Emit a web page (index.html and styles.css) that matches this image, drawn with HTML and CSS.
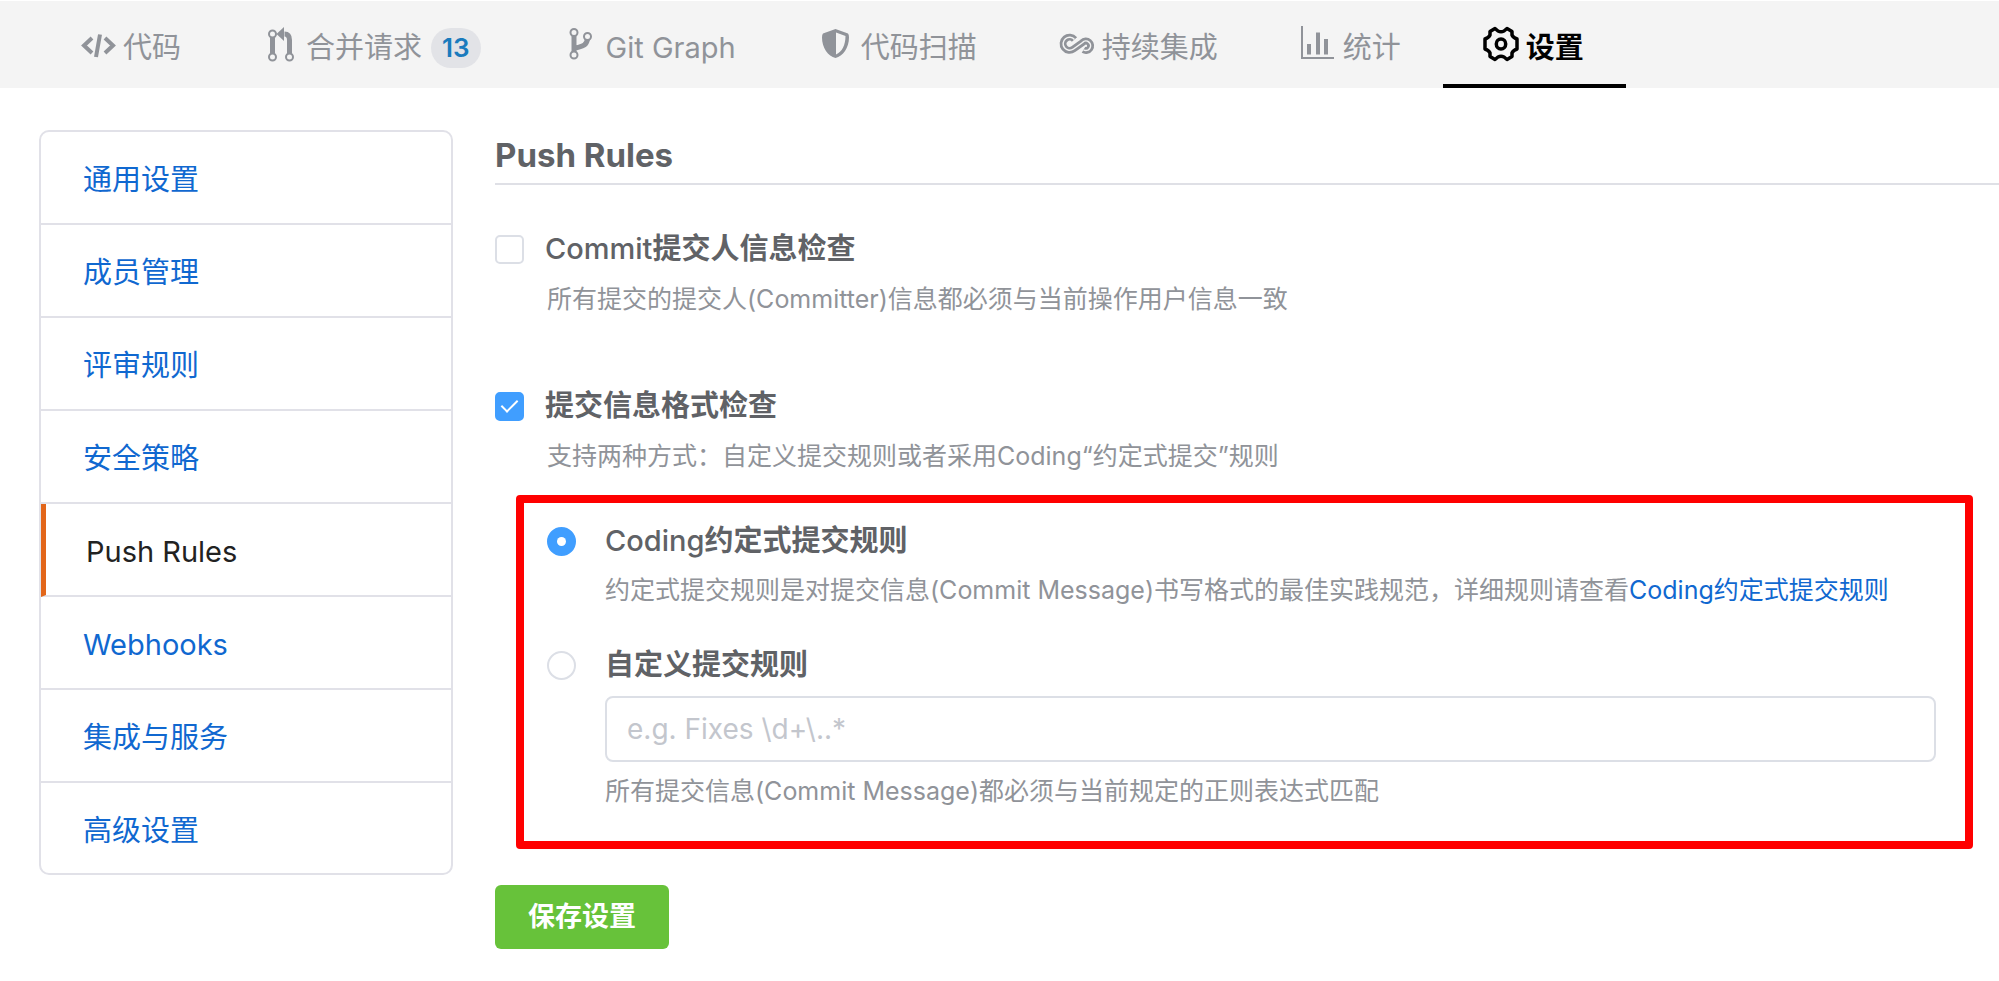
FILE: index.html
```html
<!DOCTYPE html>
<html lang="zh-CN">
<head>
<meta charset="utf-8">
<title>Push Rules</title>
<link rel="stylesheet" href="styles.css">
</head>
<body>
<nav class="tabs">
  <a class="tab" href="#code">
    <svg class="tab-icon" viewBox="0 0 35 36" fill="none" stroke="currentColor" stroke-width="4"><path d="M11 12 3 19.500 11 27M24 12l8 7.500-8 7.500M19 8.500 15 31"/></svg>
    <span>代码</span>
  </a>
  <a class="tab" href="#merge">
    <svg class="tab-icon" viewBox="0 0 35 36" fill="none" stroke="currentColor"><path stroke-width="5" d="M8.500 11v17M25.500 28V14q0-6-5-6"/><path fill="currentColor" stroke="none" d="M12.500 8 20 1v14z"/><g class="node" stroke-width="2"><circle cx="8.500" cy="8" r="3.500"/><circle cx="8.500" cy="31" r="3.500"/><circle cx="25.500" cy="31" r="3.500"/></g></svg>
    <span>合并请求</span>
    <span class="badge">13</span>
  </a>
  <a class="tab" href="#graph">
    <svg class="tab-icon" viewBox="0 0 35 36" fill="none" stroke="currentColor"><path stroke-width="5" d="M10 7v20M10 23c5-3 12-1 13.500-10"/><g class="node" stroke-width="2"><circle cx="10" cy="6.500" r="3.500"/><circle cx="23.500" cy="10.500" r="3.500"/><circle cx="10" cy="29" r="3.500"/></g></svg>
    <span>Git Graph</span>
  </a>
  <a class="tab" href="#scan">
    <svg class="tab-icon" viewBox="0 0 35 36" fill="none" stroke="currentColor"><path fill="currentColor" stroke="none" fill-rule="evenodd" d="M16.500 3 29 7.500q1 1 1 4C30 22 24 30 16.500 32 9 30 3 22 3 11.500q0-3 1-4zM17 6.500V28.500C23 26 26.500 19 26.500 10z"/></svg>
    <span>代码扫描</span>
  </a>
  <a class="tab" href="#ci">
    <svg class="tab-icon" viewBox="0 0 35 36" fill="none" stroke="currentColor"><path stroke-width="7" d="M14.500 13.500A6.500 6.500 0 1 0 13.500 23L22.500 16.500A4.700 4.700 0 1 1 23.500 23.800"/><path class="groove" stroke-width="1.500" d="M14.500 13.500A6.500 6.500 0 1 0 13.500 23L22.500 16.500A4.700 4.700 0 1 1 23.500 23.800"/></svg>
    <span>持续集成</span>
  </a>
  <a class="tab" href="#stats">
    <svg class="tab-icon" viewBox="0 0 35 36" fill="none" stroke="currentColor"><path stroke-width="2" d="M1 0v32h32"/><path stroke-width="4" d="M8 28.500V18M17 28.500V6.500M25 28.500V13"/></svg>
    <span>统计</span>
  </a>
  <a class="tab tab-active" href="#settings" aria-current="page">
    <svg class="tab-icon" viewBox="0 0 35 36" fill="none" stroke="currentColor" stroke-width="3.500" stroke-linejoin="round"><path d="M14 5Q17 6.500 20 5L23 2.500 28 5.500V9Q29 11.500 33 13V23Q29 24.500 28 27V30.500L23 33.500 20 31Q17 29.500 14 31L11 33.500 6 30.500V27Q5 24.500 1 23V13Q5 11.500 6 9V5.500L11 2.500Z"/><ellipse cx="17" cy="18" rx="4.700" ry="5"/></svg>
    <span>设置</span>
  </a>
</nav>
<div class="layout">
  <aside class="side">
    <a class="side-item" href="#general">通用设置</a>
    <a class="side-item" href="#members">成员管理</a>
    <a class="side-item" href="#review">评审规则</a>
    <a class="side-item" href="#security">安全策略</a>
    <a class="side-item side-active" href="#push" aria-current="page">Push Rules</a>
    <a class="side-item" href="#webhooks">Webhooks</a>
    <a class="side-item" href="#services">集成与服务</a>
    <a class="side-item" href="#advanced">高级设置</a>
  </aside>
  <main class="main">
    <h1 class="heading">Push Rules</h1>
    <form class="form">
      <div class="rule">
        <label class="choice"><input class="box" type="checkbox"><span>Commit<b>提交人信息检查</b></span></label>
        <p class="hint rule-hint">所有提交的提交人(Committer)信息都必须与当前操作用户信息一致</p>
      </div>
      <div class="rule">
        <label class="choice"><input class="box" type="checkbox" checked><b>提交信息格式检查</b></label>
        <p class="hint rule-hint">支持两种方式：自定义提交规则或者采用Coding“约定式提交”规则</p>
      </div>
      <div class="options">
        <div class="option">
          <label class="choice choice-radio"><input class="radio" type="radio" name="format" checked><span>Coding<b>约定式提交规则</b></span></label>
          <p class="hint">约定式提交规则是对提交信息(Commit Message)书写格式的最佳实践规范，详细规则请查看<a class="link" href="#docs">Coding约定式提交规则</a></p>
        </div>
        <div class="option">
          <label class="choice choice-radio"><input class="radio" type="radio" name="format"><b>自定义提交规则</b></label>
          <input class="field" type="text" placeholder="e.g. Fixes \d+\..*" aria-label="自定义提交规则">
          <p class="hint">所有提交信息(Commit Message)都必须与当前规定的正则表达式匹配</p>
        </div>
      </div>
      <button class="save" type="submit">保存设置</button>
    </form>
  </main>
</div>
</body>
</html>
```

FILE: styles.css
```css
* { box-sizing: border-box; }
body {
  margin: 0;
  background: #fff;
  color: #606266;
  font: 29px/40px Inter, "Noto Sans CJK SC", sans-serif;
}
a { text-decoration: none; color: #1068d0; }
p, h1 { margin: 0; }

.tabs {
  display: flex;
  height: 88px;
  padding-left: 40px;
  background: #f4f4f4;
  border-top: 1px solid #fff;
}
.tab {
  display: flex;
  align-items: center;
  gap: 7px;
  padding: 10px 42px 0 41px;
  border-bottom: 4px solid transparent;
  color: #909399;
  white-space: nowrap;
}
.tab-active { color: #000; border-color: #000; font-weight: 700; }
.tab-icon { width: 35px; height: 36px; margin-bottom: 7px; overflow: visible; }
.node { fill: #f4f4f4; }
.groove { stroke: #f4f4f4; }
.badge {
  margin-left: 2px;
  padding: 0 11px;
  border-radius: 20px;
  background: #e2e3e7;
  color: #1a7bbd;
  font-size: 26px;
  font-weight: 600;
}

.layout {
  display: grid;
  grid-template-columns: 414px minmax(0, 1fr);
  gap: 42px;
  padding: 42px 0 0 39px;
  align-items: start;
}
.side {
  border: 2px solid #e1e1e8;
  border-radius: 10px;
  overflow: hidden;
}
.side-item {
  display: block;
  padding: 28px 42px 23px;
  border-bottom: 2px solid #e1e1e8;
}
.side-item:last-child { border-bottom: 0; padding-bottom: 22px; }
.side-active { color: #222; border-left: 5px solid #e2661a; padding-left: 40px; }

.heading {
  padding: 5px 0 8px;
  border-bottom: 2px solid #dfe0e6;
  font-size: 33px;
  font-weight: 700;
}
.form { padding-top: 44px; }
.rule { margin-bottom: 67px; }
.rule:nth-child(2) { margin-bottom: 0; }
.choice { display: flex; align-items: center; gap: 21px; font-weight: 500; }
.choice b { font-weight: 600; }
.choice-radio { gap: 29px; }
.box, .radio {
  appearance: none;
  flex: none;
  display: grid;
  place-items: center;
  width: 29px;
  height: 29px;
  margin: 0;
  border: 2px solid #dcdfe6;
  border-radius: 5px;
  background: #fff;
}
.radio { border-radius: 50%; }
.box:checked, .radio:checked { background: #409eff; border-color: #409eff; }
.box:checked::after {
  content: "";
  width: 7px;
  height: 14px;
  margin-bottom: 4px;
  border: solid #fff;
  border-width: 0 2px 2px 0;
  transform: rotate(45deg);
}
.radio:checked::after {
  content: "";
  width: 9px;
  height: 9px;
  border-radius: 50%;
  background: #fff;
}
.hint { padding-top: 10px; color: #909399; font-size: 25px; }
.rule-hint { padding-left: 52px; }

.options {
  margin: 19px 26px 0 21px;
  padding: 18px 29px 30px 23px;
  border: 8px solid #f00;
  border-radius: 4px;
}
.option + .option { margin-top: 35px; }
.option .hint { padding-top: 9px; padding-left: 58px; }
.field {
  display: block;
  width: calc(100% - 58px);
  height: 66px;
  margin: 11px 0 0 58px;
  padding: 0 20px;
  border: 2px solid #dcdfe6;
  border-radius: 8px;
  background: #fff;
  color: inherit;
  font: inherit;
  font-size: 28px;
}
.field::placeholder { color: #c3c6cd; }
.save {
  margin-top: 36px;
  padding: 12px 33px;
  border: 0;
  border-radius: 6px;
  background: #67c23a;
  color: #fff;
  font: inherit;
  font-size: 27px;
  font-weight: 600;
}
```
